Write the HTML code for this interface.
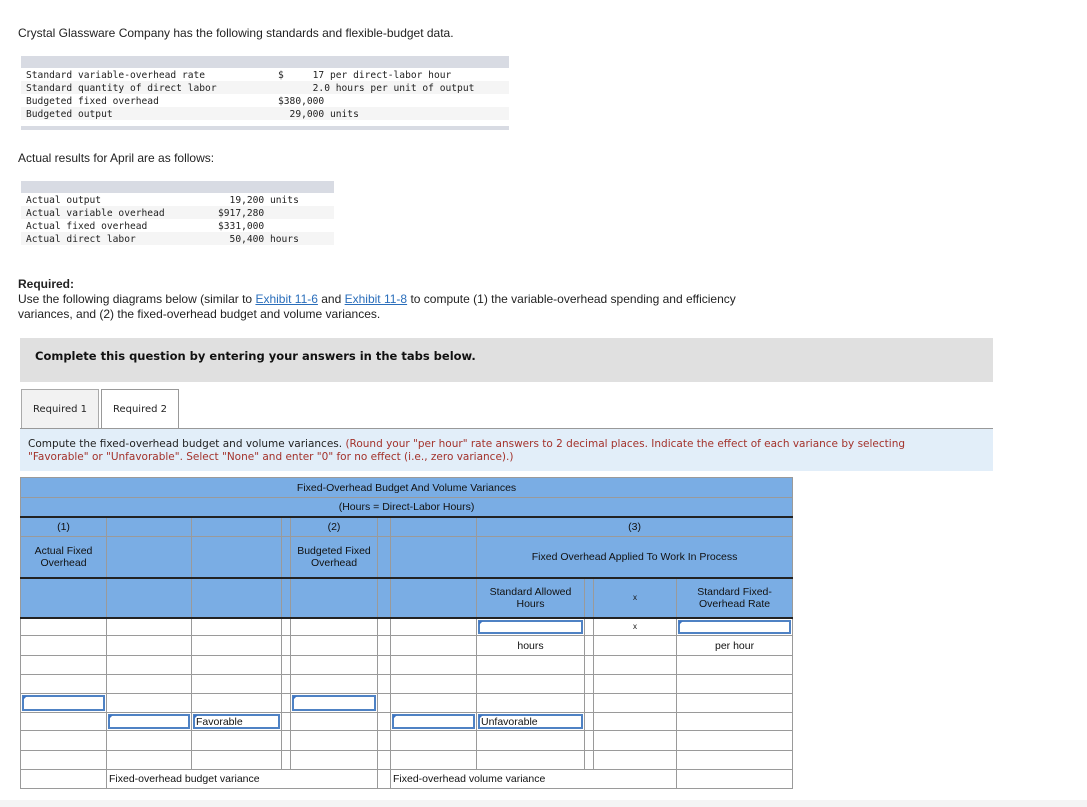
<!DOCTYPE html>
<html><head><meta charset="utf-8">
<style>
body{margin:0;width:1087px;height:807px;position:relative;background:#fff;font-family:"Liberation Sans",Arial,sans-serif;color:#222;overflow:hidden}
.a{position:absolute;white-space:nowrap}
.t{font-size:12px}
.mono{font-family:"DejaVu Sans Mono","Liberation Mono",monospace;font-size:9.6px;color:#222}
.bar{position:absolute;background:#d8dbe3}
.row{position:absolute;height:13px}
.v{font-family:"DejaVu Sans",Verdana,sans-serif}
a{color:#2a6ebb;text-decoration:underline}
table{position:absolute;left:20px;top:477px;width:772px;border-collapse:collapse;table-layout:fixed;font-size:10.5px;font-family:"Liberation Sans",Arial,sans-serif}
td{border:1px solid #9a9a9a;padding:0;text-align:center;overflow:hidden;color:#111;line-height:12px}
tr.h td{background:#7aade4}
tr.tb td{border-top:2px solid #222}
td.in{position:relative}
td.in div{position:absolute;left:1px;top:1px;right:1px;bottom:1px;border:2px solid #4f82c4;background:#fff;text-align:left;font-size:10.5px;line-height:13px;padding-left:1px}
td.in div:before{content:"";position:absolute;left:-1px;top:-1px;border-left:4px solid #3d74c2;border-bottom:4px solid transparent}
td.l{text-align:left;padding-left:2px}
</style></head><body>
<div class="a t" style="left:18px;top:26px">Crystal Glassware Company has the following standards and flexible-budget data.</div>
<div class="bar" style="left:21px;top:56px;width:488px;height:12px"></div>
<div class="row" style="left:21px;top:68px;width:488px;background:#fff"></div>
<div class="row" style="left:21px;top:81px;width:488px;background:#f5f5f5"></div>
<div class="row" style="left:21px;top:94px;width:488px;background:#fff"></div>
<div class="row" style="left:21px;top:107px;width:488px;background:#f5f5f5"></div>
<div class="bar" style="left:21px;top:126px;width:488px;height:4px"></div>
<div class="a mono" style="left:26px;top:69px;line-height:13px">Standard variable-overhead rate<br>Standard quantity of direct labor<br>Budgeted fixed overhead<br>Budgeted output</div>
<div class="a mono" style="left:278px;top:69px;line-height:13px">$&nbsp;&nbsp;&nbsp;&nbsp;&nbsp;17 per direct-labor hour<br>&nbsp;&nbsp;&nbsp;&nbsp;&nbsp;&nbsp;2.0 hours per unit of output<br>$380,000<br>&nbsp;&nbsp;29,000 units</div>
<div class="a t" style="left:18px;top:151px">Actual results for April are as follows:</div>
<div class="bar" style="left:21px;top:181px;width:313px;height:12px"></div>
<div class="row" style="left:21px;top:206px;width:313px;background:#f5f5f5"></div>
<div class="row" style="left:21px;top:232px;width:313px;background:#f5f5f5"></div>
<div class="a mono" style="left:26px;top:194px;line-height:13px">Actual output<br>Actual variable overhead<br>Actual fixed overhead<br>Actual direct labor</div>
<div class="a mono" style="left:218px;top:194px;line-height:13px">&nbsp;&nbsp;19,200 units<br>$917,280<br>$331,000<br>&nbsp;&nbsp;50,400 hours</div>
<div class="a t" style="left:18px;top:277px;font-weight:bold">Required:</div>
<div class="a t" style="left:18px;top:292px;line-height:15px">Use the following diagrams below (similar to <a>Exhibit 11-6</a> and <a>Exhibit 11-8</a> to compute (1) the variable-overhead spending and efficiency<br>variances, and (2) the fixed-overhead budget and volume variances.</div>
<div class="a" style="left:20px;top:338px;width:973px;height:44px;background:#e0e0e0"></div>
<div class="a v" style="left:35px;top:349px;font-size:11.5px;font-weight:bold;color:#111">Complete this question by entering your answers in the tabs below.</div>
<div class="a v" style="left:21px;top:389px;width:76px;height:39px;background:#f2f2f2;border:1px solid #aaa;border-bottom:none;font-size:10px;line-height:40px;text-align:center">Required 1</div>
<div class="a v" style="left:101px;top:389px;width:76px;height:40px;background:#fff;border:1px solid #999;border-bottom:none;font-size:10px;line-height:40px;text-align:center">Required 2</div>
<div class="a" style="left:20px;top:428px;width:973px;height:1px;background:#999"></div>
<div class="a" style="left:20px;top:429px;width:973px;height:42px;background:#e2eef9"></div>
<div class="a v" style="left:28px;top:438px;font-size:10.5px;line-height:13px;color:#222">Compute the fixed-overhead budget and volume variances. <span style="color:#a3322b">(Round your "per hour" rate answers to 2 decimal places. Indicate the effect of each variance by selecting<br>"Favorable" or "Unfavorable". Select "None" and enter "0" for no effect (i.e., zero variance).)</span></div>
<table>
<colgroup><col style="width:86px"><col style="width:85px"><col style="width:90px"><col style="width:9px"><col style="width:87px"><col style="width:13px"><col style="width:86px"><col style="width:108px"><col style="width:9px"><col style="width:83px"><col style="width:116px"></colgroup>
<tr class="h" style="height:20px"><td colspan="11">Fixed-Overhead Budget And Volume Variances</td></tr>
<tr class="h" style="height:19px"><td colspan="11">(Hours = Direct-Labor Hours)</td></tr>
<tr class="h tb" style="height:20px"><td>(1)</td><td></td><td></td><td></td><td>(2)</td><td></td><td></td><td colspan="4">(3)</td></tr>
<tr class="h" style="height:41px"><td>Actual Fixed Overhead</td><td></td><td></td><td></td><td>Budgeted Fixed Overhead</td><td></td><td></td><td colspan="4">Fixed Overhead Applied To Work In Process</td></tr>
<tr class="h tb" style="height:40px"><td></td><td></td><td></td><td></td><td></td><td></td><td></td><td>Standard Allowed Hours</td><td></td><td style="font-size:8px">x</td><td>Standard Fixed-Overhead Rate</td></tr>
<tr class="tb" style="height:18px"><td></td><td></td><td></td><td></td><td></td><td></td><td></td><td class="in"><div></div></td><td></td><td style="font-size:8px">x</td><td class="in"><div></div></td></tr>
<tr style="height:20px"><td></td><td></td><td></td><td></td><td></td><td></td><td></td><td>hours</td><td></td><td></td><td>per hour</td></tr>
<tr style="height:19px"><td></td><td></td><td></td><td></td><td></td><td></td><td></td><td></td><td></td><td></td><td></td></tr>
<tr style="height:19px"><td></td><td></td><td></td><td></td><td></td><td></td><td></td><td></td><td></td><td></td><td></td></tr>
<tr style="height:19px"><td class="in"><div></div></td><td></td><td></td><td></td><td class="in"><div></div></td><td></td><td></td><td></td><td></td><td></td><td></td></tr>
<tr style="height:18px"><td></td><td class="in"><div></div></td><td class="in"><div>Favorable</div></td><td></td><td></td><td></td><td class="in"><div></div></td><td class="in"><div>Unfavorable</div></td><td></td><td></td><td></td></tr>
<tr style="height:20px"><td></td><td></td><td></td><td></td><td></td><td></td><td></td><td></td><td></td><td></td><td></td></tr>
<tr style="height:19px"><td></td><td></td><td></td><td></td><td></td><td></td><td></td><td></td><td></td><td></td><td></td></tr>
<tr style="height:19px"><td></td><td colspan="4" class="l">Fixed-overhead budget variance</td><td></td><td colspan="4" class="l">Fixed-overhead volume variance</td><td></td></tr>
</table>
<div class="a" style="left:0;top:800px;width:1087px;height:7px;background:#f4f4f4"></div>
</body></html>
